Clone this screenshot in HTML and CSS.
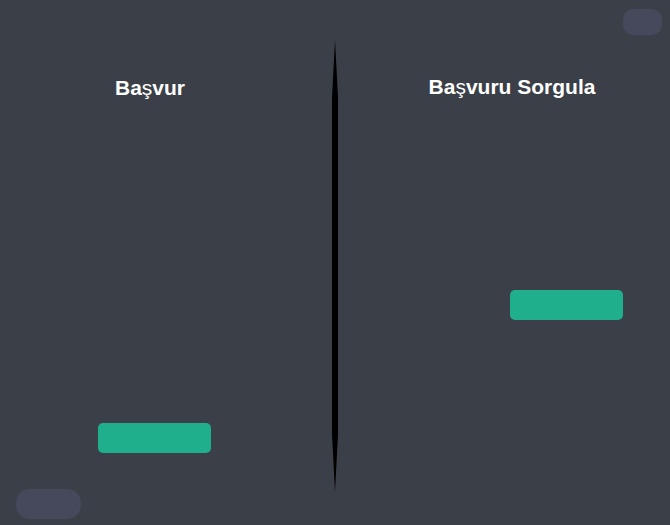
FILE: index.html
```html
<!DOCTYPE html>
<html lang="tr">
<head>
<meta charset="utf-8">
<meta name="viewport" content="width=device-width, initial-scale=1">
<title>Başvuru</title>
<link rel="stylesheet" href="styles.css">
</head>
<body>
<main class="page">
  <section class="panel panel-apply">
    <h1 class="title">Ba<span class="light">ş</span>vur</h1>
    <button class="action" type="button" aria-label="Başvur"></button>
    <button class="pill pill-wide" type="button" aria-label="Geri"></button>
  </section>
  <div class="divider"></div>
  <section class="panel panel-query">
    <button class="pill" type="button" aria-label="Kapat"></button>
    <h1 class="title">Ba<span class="light">ş</span>vuru Sorgula</h1>
    <button class="action" type="button" aria-label="Başvuru Sorgula"></button>
  </section>
</main>
</body>
</html>
```

FILE: styles.css
```css
* {
  box-sizing: border-box;
}

body {
  margin: 0;
  background: #3b3f47;
  color: #fff;
  font-family: "Liberation Sans", Arial, sans-serif;
}

.page {
  display: grid;
  grid-template-columns: 1fr 6px 1fr;
  min-height: 100vh;
}

.panel {
  display: flex;
  flex-direction: column;
}

.panel-apply {
  padding: 76px 16px 6px;
}

.panel-query {
  padding: 9px 8px 0;
}

.title {
  margin: 0;
  font-size: 21px;
  line-height: 24px;
  font-weight: 700;
  text-align: center;
}

.light {
  font-weight: 400;
}

.panel-apply .title {
  margin-right: 32px;
}

.panel-query .title {
  margin-top: 40px;
  margin-right: -16px;
}

.action {
  width: 113px;
  height: 30px;
  padding: 0;
  border: 0;
  border-radius: 5px;
  background: #20af8c;
}

.panel-apply .action {
  align-self: center;
  margin: auto 24px 36px 0;
}

.panel-query .action {
  align-self: flex-end;
  margin: 191px 39px 0 0;
}

.pill {
  align-self: flex-end;
  width: 39px;
  height: 26px;
  padding: 0;
  border: 0;
  border-radius: 10px;
  background: #46485c;
}

.pill-wide {
  align-self: flex-start;
  width: 65px;
  height: 30px;
  border-radius: 14px;
}

/* Bar tapering to a point at both ends */
.divider {
  margin: 40px 0 33px;
  background: #000;
  clip-path: polygon(50% 0, 100% 58px, 100% calc(100% - 58px), 50% 100%, 0 calc(100% - 58px), 0 58px);
}
```
